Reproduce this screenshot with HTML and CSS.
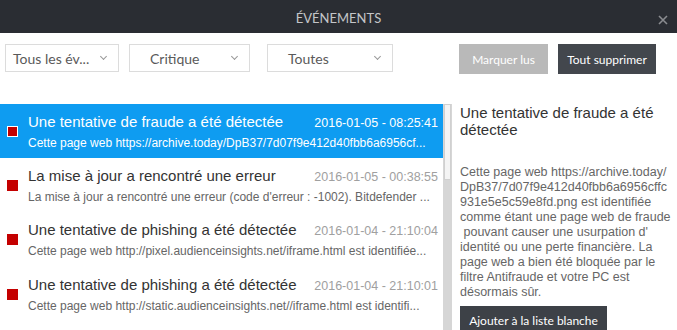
FILE: index.html
```html
<!DOCTYPE html>
<html lang="fr">
<head>
    <meta charset="UTF-8">
    <meta name="viewport" content="width=device-width, initial-scale=1.0">
    <title>Événements</title>
    <link rel="stylesheet" href="styles.css">
</head>
<body>

<div class="window">
    <header class="titlebar">
        <span class="title">ÉVÉNEMENTS</span>
        <span class="close">
            <svg width="10" height="10" viewBox="0 0 10 10"><path d="M1 1L9 9M9 1L1 9" stroke="#8a8c90" stroke-width="1.6"/></svg>
        </span>
    </header>

    <div class="toolbar">
        <div class="filters">
            <div class="select select-type"><span>Tous les év...</span><i class="chevron"></i></div>
            <div class="select select-level"><span>Critique</span><i class="chevron"></i></div>
            <div class="select select-period"><span>Toutes</span><i class="chevron"></i></div>
        </div>
        <div class="actions">
            <button class="btn btn-light">Marquer lus</button>
            <button class="btn btn-dark">Tout supprimer</button>
        </div>
    </div>

    <div class="content">
        <ul class="event-list">
            <li class="event selected">
                <span class="marker"></span>
                <div class="event-body">
                    <div class="event-head">
                        <span class="event-title">Une tentative de fraude a été détectée</span>
                        <span class="event-date">2016-01-05 - 08:25:41</span>
                    </div>
                    <div class="event-text">Cette page web https://archive.today/DpB37/7d07f9e412d40fbb6a6956cf...</div>
                </div>
            </li>
            <li class="event">
                <span class="marker"></span>
                <div class="event-body">
                    <div class="event-head">
                        <span class="event-title">La mise à jour a rencontré une erreur</span>
                        <span class="event-date">2016-01-05 - 00:38:55</span>
                    </div>
                    <div class="event-text">La mise à jour a rencontré une erreur (code d'erreur : -1002). Bitdefender ...</div>
                </div>
            </li>
            <li class="event">
                <span class="marker"></span>
                <div class="event-body">
                    <div class="event-head">
                        <span class="event-title">Une tentative de phishing a été détectée</span>
                        <span class="event-date">2016-01-04 - 21:10:04</span>
                    </div>
                    <div class="event-text">Cette page web http://pixel.audienceinsights.net/iframe.html est identifiée...</div>
                </div>
            </li>
            <li class="event">
                <span class="marker"></span>
                <div class="event-body">
                    <div class="event-head">
                        <span class="event-title">Une tentative de phishing a été détectée</span>
                        <span class="event-date">2016-01-04 - 21:10:01</span>
                    </div>
                    <div class="event-text">Cette page web http://static.audienceinsights.net//iframe.html est identifi...</div>
                </div>
            </li>
        </ul>

        <div class="scrollbar"><div class="thumb"></div></div>

        <section class="detail">
            <h2>Une tentative de fraude a été détectée</h2>
            <p>Cette page web https://archive.today/<br>DpB37/7d07f9e412d40fbb6a6956cffc<br>931e5e5c59e8fd.png est identifiée<br>comme étant une page web de fraude<br>&nbsp;pouvant causer une usurpation d'<br>identité ou une perte financière. La<br>page web a bien été bloquée par le<br>filtre Antifraude et votre PC est<br>désormais sûr.</p>
            <button class="btn btn-dark btn-whitelist">Ajouter à la liste blanche</button>
        </section>
    </div>
</div>

</body>
</html>
```

FILE: styles.css
```css
body {
    margin: 0;
    background: #fff;
    font-family: 'Liberation Sans', Arial, sans-serif;
}

.window {
    width: 677px;
    height: 330px;
    overflow: hidden;
}

/* title bar */
.titlebar {
    position: relative;
    height: 33px;
    background: #2a2d33;
    display: flex;
    align-items: center;
    justify-content: center;
}

.title {
    font-family: 'Lato', sans-serif;
    font-size: 13px;
    color: #c4c5c8;
    padding-top: 3px;
}

.close {
    position: absolute;
    right: 9px;
    top: 15px;
    display: flex;
}

/* filters and buttons */
.toolbar {
    display: flex;
    justify-content: space-between;
    align-items: flex-start;
    height: 60px;
    padding: 11px 21px 0 5px;
}

.filters {
    display: flex;
}

.select {
    box-sizing: border-box;
    height: 28px;
    border: 1px solid #dcdcdc;
    display: flex;
    align-items: center;
    justify-content: space-between;
    font-family: 'Lato', sans-serif;
    font-size: 14px;
    color: #5a5a5a;
    padding: 0 12px 0 20px;
}

.select-type {
    width: 114px;
    padding-left: 7px;
}

.select-level {
    width: 121px;
    margin-left: 10px;
}

.select-period {
    width: 126px;
    margin-left: 17px;
}

.chevron {
    width: 4px;
    height: 4px;
    border-right: 1px solid #999;
    border-bottom: 1px solid #999;
    transform: rotate(45deg);
    margin-top: -3px;
}

.actions {
    display: flex;
    gap: 10px;
}

.btn {
    border: none;
    height: 30px;
    padding: 0;
    color: #fff;
    font-family: 'Lato', sans-serif;
    font-size: 12px;
    cursor: pointer;
}

.btn-light {
    width: 89px;
    background: #b9b9b9;
}

.btn-dark {
    width: 98px;
    background: #43474d;
}

/* list + detail */
.content {
    display: grid;
    grid-template-columns: 443px 9px 1fr;
    height: 226px;
}

.event-list {
    list-style: none;
    margin: 0;
    padding: 0;
}

.event {
    display: flex;
    align-items: center;
    height: 54px;
    padding: 0 5px 0 7px;
}

.event + .event {
    height: 54.5px;
}

.event.selected {
    background: #0e9cf1;
}

.marker {
    box-sizing: border-box;
    width: 11px;
    height: 11px;
    background: #c40000;
    flex-shrink: 0;
}

.selected .marker {
    border: 1px solid #fff;
}

.event-body {
    flex: 1;
    min-width: 0;
    margin-left: 10px;
    padding-top: 1px;
}

.event-head {
    display: flex;
    justify-content: space-between;
    align-items: baseline;
    line-height: 18px;
}

.event-title {
    font-size: 15px;
    color: #333;
}

.event-date {
    font-size: 12.5px;
    color: #a0a0a0;
}

.event-text {
    margin-top: 3px;
    font-size: 12px;
    line-height: 16px;
    color: #666;
    white-space: nowrap;
    overflow: hidden;
}

.selected .event-title,
.selected .event-date,
.selected .event-text {
    color: #fff;
}

.scrollbar {
    background: #d6d6d6;
    padding: 0 1px;
}

.thumb {
    height: 76px;
    background: #f4f4f4;
    border: 1px solid #d0d0d0;
    box-sizing: border-box;
}

.detail {
    padding: 0 4px 0 8px;
}

.detail h2 {
    margin: 0;
    font-size: 15px;
    font-weight: normal;
    line-height: 17px;
    color: #333;
}

.detail p {
    margin: 27px 0 0;
    font-size: 12.5px;
    line-height: 15px;
    color: #666;
    white-space: nowrap;
}

.btn-whitelist {
    display: block;
    width: 147px;
    height: 28px;
    margin-top: 6px;
    background: #3d4147;
}
```
